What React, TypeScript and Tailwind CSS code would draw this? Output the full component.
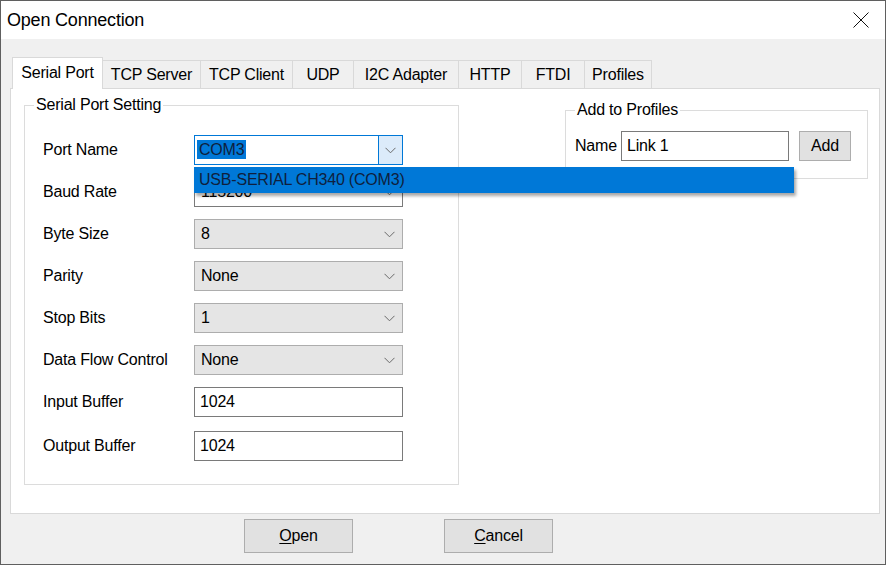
import React from 'react';

type ComboKind = 'grey' | 'white' | 'active';

const tabs = [
  { label: 'Serial Port', w: 'w-[91px]', active: true },
  { label: 'TCP Server', w: 'w-[98px]' },
  { label: 'TCP Client', w: 'w-[92px]' },
  { label: 'UDP', w: 'w-[61px]' },
  { label: 'I2C Adapter', w: 'w-[105px]' },
  { label: 'HTTP', w: 'w-[63px]' },
  { label: 'FTDI', w: 'w-[63px]' },
  { label: 'Profiles', w: 'w-[67px]' },
];

function Chevron() {
  return (
    <svg width="11" height="7" viewBox="0 0 11 7" className="shrink-0">
      <path d="M0.5 0.8L5.5 5.8L10.5 0.8" fill="none" stroke="#6a6a6a" strokeWidth="1" />
    </svg>
  );
}

function Combo({ value, kind }: { value: string; kind: ComboKind }) {
  if (kind === 'active') {
    return (
      <div className="relative w-[209px] h-[30px]">
        <div className="w-full h-full flex items-center bg-white border border-[#0078d7]">
          <div className="flex-1 pl-[2px]">
            <span className="bg-[#0078d7] text-[#0f1f3d] px-[2px] py-[1px]">{value}</span>
          </div>
          <div className="w-[24px] h-full flex items-center justify-center bg-[#dcebfa] border-l border-[#0078d7]">
            <Chevron />
          </div>
        </div>
        {/* dropdown list */}
        <div className="absolute left-0 top-[32px] w-[600px] h-[26px] z-20 bg-[#0078d7] text-[#0f1f3d] flex items-center pl-[5px] shadow-[2px_3px_3px_rgba(0,0,0,0.35)]">
          USB-SERIAL CH340 (COM3)
        </div>
      </div>
    );
  }
  const box = kind === 'white' ? 'bg-white border-[#7a7a7a]' : 'bg-[#e5e5e5] border-[#adadad]';
  return (
    <div className={`w-[209px] h-[30px] flex items-center border ${box} pl-[6px] pr-[7px]`}>
      <span className="flex-1">{value}</span>
      <Chevron />
    </div>
  );
}

function TextBox({ value, w }: { value: string; w: string }) {
  return (
    <div className={`${w} h-[30px] flex items-center bg-white border border-[#7a7a7a] pl-[5px]`}>{value}</div>
  );
}

function Row({ label, children }: { label: string; children: React.ReactNode }) {
  return (
    <div className="flex items-center h-[30px]">
      <span className="w-[151px]">{label}</span>
      {children}
    </div>
  );
}

export default function App() {
  return (
    <div className="w-[886px] h-[565px] border border-[#5f5f5f] bg-[#f0f0f0] flex flex-col overflow-hidden text-[16px] tracking-[-0.2px] text-black font-['Liberation_Sans',Arial,sans-serif]">
      {/* title bar */}
      <div className="h-[38px] shrink-0 bg-white flex items-center justify-between pl-[6px] pr-[16px]">
        <span className="text-[18px]">Open Connection</span>
        <svg width="16" height="16" viewBox="0 0 16 16">
          <path d="M0.5 0.5L15.5 15.5M15.5 0.5L0.5 15.5" stroke="#111" strokeWidth="1" />
        </svg>
      </div>

      <div className="flex flex-col pl-[9px] pt-[18px]">
        {/* tab strip */}
        <div className="flex items-end h-[31px] pl-[2px]">
          {tabs.map(t =>
            t.active ? (
              <div
                key={t.label}
                className={`${t.w} h-[32px] -mb-[1px] relative z-10 bg-white border border-b-0 border-[#d9d9d9] flex items-center justify-center pb-[2px]`}
              >
                {t.label}
              </div>
            ) : (
              <div
                key={t.label}
                className={`${t.w} h-[28px] bg-[#f0f0f0] border border-b-0 border-l-0 border-[#d9d9d9] flex items-center justify-center`}
              >
                {t.label}
              </div>
            )
          )}
        </div>

        {/* tab page */}
        <div className="w-[870px] h-[426px] bg-white border border-[#d9d9d9] flex items-start">
          <fieldset className="w-[435px] ml-[13px] mt-[6px] border border-[#dcdcdc]">
            <legend className="ml-[9px] px-[2px] leading-[20px]">Serial Port Setting</legend>
            <div className="flex flex-col gap-[12px] pl-[18px] pt-[20px] pb-[23px]">
              <Row label="Port Name"><Combo value="COM3" kind="active" /></Row>
              <Row label="Baud Rate"><Combo value="115200" kind="white" /></Row>
              <Row label="Byte Size"><Combo value="8" kind="grey" /></Row>
              <Row label="Parity"><Combo value="None" kind="grey" /></Row>
              <Row label="Stop Bits"><Combo value="1" kind="grey" /></Row>
              <Row label="Data Flow Control"><Combo value="None" kind="grey" /></Row>
              <Row label="Input Buffer"><TextBox value="1024" w="w-[209px]" /></Row>
              <div className="mt-[2px]">
                <Row label="Output Buffer"><TextBox value="1024" w="w-[209px]" /></Row>
              </div>
            </div>
          </fieldset>

          <fieldset className="w-[303px] ml-[106px] mt-[11px] border border-[#dcdcdc]">
            <legend className="ml-[9px] px-[2px] leading-[20px]">Add to Profiles</legend>
            <div className="flex items-center pl-[9px] pt-[11px] pb-[17px]">
              <span className="w-[46px]">Name</span>
              <TextBox value="Link 1" w="w-[168px]" />
              <button className="ml-[10px] w-[52px] h-[30px] bg-[#e1e1e1] border border-[#adadad]">Add</button>
            </div>
          </fieldset>
        </div>

        {/* dialog buttons */}
        <div className="flex mt-[5px] pl-[234px] gap-[91px]">
          <button className="w-[109px] h-[34px] bg-[#e1e1e1] border border-[#adadad]">
            <span className="underline underline-offset-2">O</span>pen
          </button>
          <button className="w-[109px] h-[34px] bg-[#e1e1e1] border border-[#adadad]">
            <span className="underline underline-offset-2">C</span>ancel
          </button>
        </div>
      </div>
    </div>
  );
}
